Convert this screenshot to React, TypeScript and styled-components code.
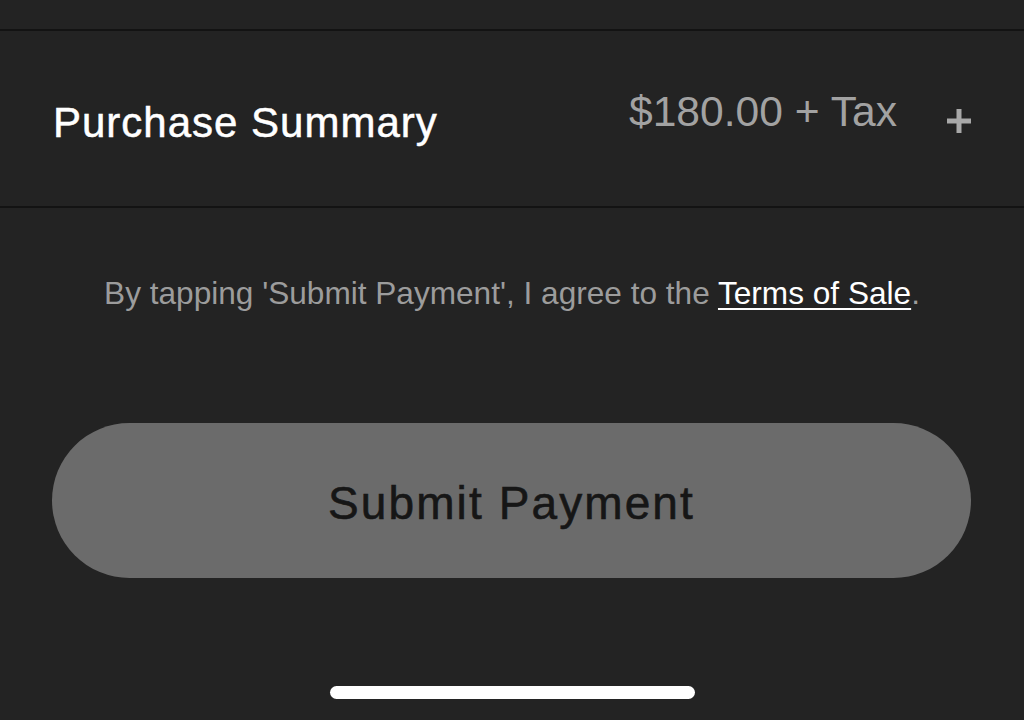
import React from "react";
import styled, { createGlobalStyle } from "styled-components";

const GlobalStyle = createGlobalStyle`
  html, body {
    margin: 0;
    padding: 0;
    background: #232323;
  }
  body {
    font-family: "Liberation Sans", Arial, Helvetica, sans-serif;
    -webkit-font-smoothing: antialiased;
  }
`;

const Page = styled.div`
  width: 1024px;
  height: 720px;
  overflow: hidden;
  background: #232323;
  display: flex;
  flex-direction: column;
`;

const TopStrip = styled.div`
  height: 29px;
  flex-shrink: 0;
  border-bottom: 2px solid #131313;
`;

const SummaryRow = styled.div`
  height: 177px;
  flex-shrink: 0;
  box-sizing: border-box;
  padding: 0 52px 0 53px;
  display: flex;
  align-items: center;
  border-bottom: 2px solid #131313;
`;

const SummaryTitle = styled.div`
  flex: 1;
  margin-top: 8px;
  font-size: 42px;
  line-height: 50px;
  letter-spacing: 1px;
  color: #ffffff;
  -webkit-text-stroke: 0.5px #ffffff;
`;

const Price = styled.div`
  margin-bottom: 15px;
  font-size: 42.6px;
  line-height: 50px;
  color: #a2a2a2;
`;

const ExpandButton = styled.button`
  margin: 4px 0 0 49px;
  padding: 0;
  width: 26px;
  height: 26px;
  border: 0;
  background: none;
  display: flex;
  align-items: center;
  justify-content: center;
`;

const TermsText = styled.p`
  margin: 65px 0 0;
  text-align: center;
  font-size: 31.6px;
  line-height: 40px;
  color: #9c9c9c;
`;

const TermsLink = styled.a`
  color: #ffffff;
  text-decoration: underline;
  text-decoration-thickness: 2px;
  text-underline-offset: 4px;
`;

const SubmitButton = styled.button`
  margin: 110px 53px 0 52px;
  height: 155px;
  flex-shrink: 0;
  border: 0;
  border-radius: 78px;
  background: #6b6b6b;
  padding: 5px 0 0;
  font-family: "Liberation Sans", Arial, Helvetica, sans-serif;
  font-size: 46px;
  line-height: 56px;
  letter-spacing: 2.1px;
  color: #161616;
  -webkit-text-stroke: 0.6px #161616;
`;

const HomeIndicator = styled.div`
  align-self: center;
  margin-top: 108px;
  width: 365px;
  height: 13px;
  border-radius: 7px;
  background: #ffffff;
  flex-shrink: 0;
`;

const PlusIcon = () => (
  <svg width="26" height="26" viewBox="0 0 26 26">
    <path d="M13 1v24M1 13h24" stroke="#a8a8a8" strokeWidth="5" fill="none" />
  </svg>
);

export default function App() {
  return (
    <>
      <GlobalStyle />
      <Page>
        <TopStrip />
        <SummaryRow>
          <SummaryTitle>Purchase Summary</SummaryTitle>
          <Price>$180.00 + Tax</Price>
          <ExpandButton aria-label="Expand">
            <PlusIcon />
          </ExpandButton>
        </SummaryRow>
        <TermsText>
          By tapping 'Submit Payment', I agree to the{" "}
          <TermsLink href="#">Terms of Sale</TermsLink>.
        </TermsText>
        <SubmitButton>Submit Payment</SubmitButton>
        <HomeIndicator />
      </Page>
    </>
  );
}
